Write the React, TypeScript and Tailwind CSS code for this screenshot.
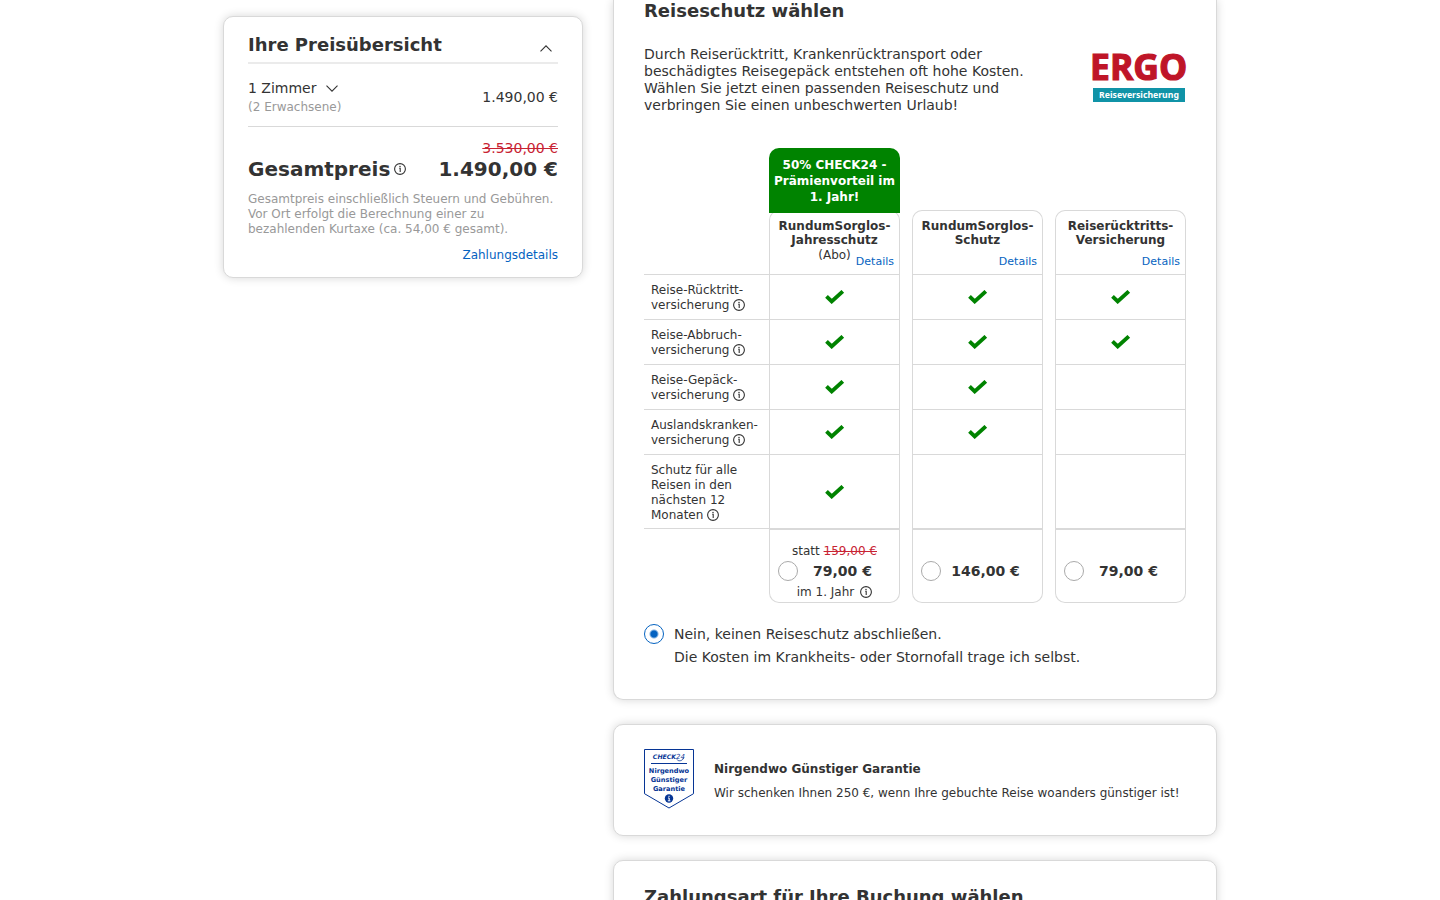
import React, { useState } from 'react';

interface Tariff {
  id: string;
  title: string[];
  suffix?: string;
  badge?: string[];
  price: string;
  oldPrice?: string;
  note?: string;
}

const TARIFFS: Tariff[] = [
  {
    id: 'jahresschutz',
    title: ['RundumSorglos-', 'Jahresschutz'],
    suffix: '(Abo)',
    badge: ['50% CHECK24 -', 'Prämienvorteil im', '1. Jahr!'],
    price: '79,00 €',
    oldPrice: '159,00 €',
    note: 'im 1. Jahr',
  },
  { id: 'schutz', title: ['RundumSorglos-', 'Schutz'], price: '146,00 €' },
  { id: 'ruecktritt', title: ['Reiserücktritts-', 'Versicherung'], price: '79,00 €' },
];

const BENEFITS = [
  { label: ['Reise-Rücktritt-', 'versicherung'], included: [true, true, true] },
  { label: ['Reise-Abbruch-', 'versicherung'], included: [true, true, true] },
  { label: ['Reise-Gepäck-', 'versicherung'], included: [true, true, false] },
  { label: ['Auslandskranken-', 'versicherung'], included: [true, true, false] },
  { label: ['Schutz für alle', 'Reisen in den', 'nächsten 12', 'Monaten'], included: [true, false, false] },
];

const CARD = 'border border-[#d9d9d9] bg-white shadow-[0_0_10px_rgba(0,0,0,0.16)]';
const RADIO =
  'size-5 shrink-0 appearance-none rounded-full border border-[#aaa] bg-white checked:border-[#0563c1] checked:bg-[radial-gradient(circle,#0563c1_3px,transparent_5px)]';

const InfoIcon = () => (
  <svg viewBox="0 0 12 12" className="inline-block size-3 align-[-2px]" fill="none" aria-hidden="true">
    <circle cx="6" cy="6" r="5.4" stroke="#333" strokeWidth="1.1" />
    <circle cx="6" cy="3.4" r="0.75" fill="#333" />
    <path d="M5.2 5.2h1v3.8" stroke="#333" strokeWidth="1.1" />
  </svg>
);

const CheckIcon = () => (
  <svg viewBox="0 0 20 14" className="mx-auto h-3.5 w-5" fill="none" role="img" aria-label="enthalten">
    <path d="M1.5 6.4L6.7 11.4L17.8 1.4" stroke="#008300" strokeWidth="3.9" />
  </svg>
);

const Chevron = ({ up = false }: { up?: boolean }) => (
  <svg viewBox="0 0 12 7" className="inline-block h-[7px] w-3" fill="none" aria-hidden="true">
    <path d={up ? 'M0.5 6.3L6 0.8L11.5 6.3' : 'M0.5 0.7L6 6.2L11.5 0.7'} stroke="#333" strokeWidth="1.1" />
  </svg>
);

const ErgoLogo = () => (
  <svg viewBox="0 0 94 50" className="h-[50px] w-[94px] shrink-0 overflow-visible" role="img" aria-label="ERGO Reiseversicherung">
    <text x="-2" y="27" fill="#bf1528" fontFamily="Open Sans, sans-serif" fontWeight="700" fontSize="35.5" stroke="#bf1528" strokeWidth="1.2">
      ERGO
    </text>
    <rect x="1" y="35" width="92" height="14" fill="#1093a7" />
    <text x="47" y="45" textAnchor="middle" fill="#fff" fontFamily="Noto Sans, sans-serif" fontWeight="700" fontSize="8.7">
      Reiseversicherung
    </text>
  </svg>
);

const GuaranteeSeal = () => (
  <svg viewBox="0 0 50 60" className="h-[60px] w-[50px] shrink-0" role="img" aria-label="Nirgendwo Günstiger Garantie">
    <path d="M0.5 0.5H49.5V44.7L25 59L0.5 44.7Z" fill="#fff" stroke="#063595" strokeWidth="1" />
    <g fill="#063595" textAnchor="middle" fontWeight="700" fontFamily="DejaVu Sans, sans-serif">
      <text x="20.5" y="9.7" fontSize="6.2" fontStyle="italic">CHECK</text>
      <text x="36.5" y="10" fontSize="7" fontStyle="italic" fontWeight="400">24</text>
      <text x="25" y="24" fontSize="6.6">Nirgendwo</text>
      <text x="25" y="33" fontSize="6.6">Günstiger</text>
      <text x="25" y="42" fontSize="6.6">Garantie</text>
    </g>
    <path d="M33 10.5C34 12.5 38.5 12.3 39.5 9" fill="none" stroke="#063595" strokeWidth="0.8" />
    <path d="M7 14.5H43" stroke="#063595" strokeWidth="1" />
    <circle cx="25" cy="49.5" r="4.2" fill="#063595" />
    <path d="M25 46.8v1.2M24 49h1.2v2.7M23.8 51.8h2.6" stroke="#fff" strokeWidth="1" fill="none" />
  </svg>
);

const Lines = ({ lines }: { lines: string[] }) => (
  <>
    {lines.map((line, i) => (
      <React.Fragment key={line}>
        {i > 0 && <br />}
        {line}
      </React.Fragment>
    ))}
  </>
);

const PriceOverview = () => (
  <aside className={`w-[360px] shrink-0 rounded-[10px] px-6 pt-4 pb-3 ${CARD}`}>
    <div className="flex items-center justify-between border-b-2 border-[#ebebeb] pb-[5px]">
      <h2 className="text-lg leading-6 font-bold">Ihre Preisübersicht</h2>
      <button type="button" aria-label="Preisübersicht einklappen" className="flex px-1.5 pt-1.5">
        <Chevron up />
      </button>
    </div>
    <div className="flex items-center justify-between border-b border-[#d9d9d9] pt-3.5 pb-2.5 text-sm">
      <div>
        <button type="button" className="flex items-center gap-2.5 leading-5">
          1 Zimmer <Chevron />
        </button>
        <p className="text-xs leading-[18px] text-[#999]">(2 Erwachsene)</p>
      </div>
      <span>1.490,00 €</span>
    </div>
    <p className="pt-3 text-right text-sm leading-[18px] text-[#c82333] line-through">3.530,00 €</p>
    <div className="flex items-center justify-between text-xl leading-6 font-bold">
      <span className="flex items-center gap-1">
        Gesamtpreis <InfoIcon />
      </span>
      <span>1.490,00 €</span>
    </div>
    <p className="pt-[11px] text-xs leading-[15px] text-[#999]">
      Gesamtpreis einschließlich Steuern und Gebühren.
      <br />
      Vor Ort erfolgt die Berechnung einer zu
      <br />
      bezahlenden Kurtaxe (ca. 54,00 € gesamt).
    </p>
    <p className="pt-2 text-right text-xs leading-5">
      <a href="#zahlungsdetails" className="text-[#0563c1]">Zahlungsdetails</a>
    </p>
  </aside>
);

const InsuranceTable = ({ selected, onSelect }: { selected: string; onSelect: (id: string) => void }) => (
  <table className="w-full table-fixed border-separate border-spacing-0 text-xs">
    <colgroup>
      <col className="w-[125px]" />
      <col />
      <col className="w-3" />
      <col />
      <col className="w-3" />
      <col />
    </colgroup>
    <thead>
      <tr>
        <td className="p-0" />
        {TARIFFS.map((t, i) => (
          <React.Fragment key={t.id}>
            {i > 0 && <td className="p-0" />}
            <th scope="col" className="p-0 align-bottom">
              {t.badge && (
                <div className="relative z-10 -mb-[3px] rounded-t-[10px] bg-[#008300] pt-[9px] pb-2 leading-4 whitespace-nowrap text-white">
                  <Lines lines={t.badge} />
                </div>
              )}
              <div className="relative h-16 rounded-t-[10px] border border-b-0 border-[#d9d9d9] pt-2 leading-[14px]">
                <Lines lines={t.title} />
                {t.suffix && <div className="leading-4 font-normal">{t.suffix}</div>}
                <a href={`#${t.id}`} className="absolute right-[5px] bottom-[5px] text-[11px] font-normal text-[#0563c1]">
                  Details
                </a>
              </div>
            </th>
          </React.Fragment>
        ))}
      </tr>
    </thead>
    <tbody>
      {BENEFITS.map((b) => (
        <tr key={b.label[0]} className="h-[45px]">
          <th scope="row" className="border-t border-[#d9d9d9] pt-2 pb-[5px] pl-[7px] text-left align-top leading-[15px] font-normal whitespace-nowrap">
            <Lines lines={b.label} /> <InfoIcon />
          </th>
          {b.included.map((included, i) => (
            <React.Fragment key={TARIFFS[i].id}>
              {i > 0 && <td className="p-0" />}
              <td className="border-x border-t border-[#d9d9d9] p-0 align-middle">{included && <CheckIcon />}</td>
            </React.Fragment>
          ))}
        </tr>
      ))}
    </tbody>
    <tfoot>
      <tr className="h-[75px]">
        <td className="border-t border-[#d9d9d9] p-0" />
        {TARIFFS.map((t, i) => (
          <React.Fragment key={t.id}>
            {i > 0 && <td className="p-0" />}
            <td className="rounded-b-[10px] border border-t-2 border-[#d9d9d9] p-0 align-top">
              <label className="block pt-[11px] text-center leading-5">
                <span className="block h-5">
                  {t.oldPrice && (
                    <>
                      statt <s className="text-[#c82333]">{t.oldPrice}</s>
                    </>
                  )}
                </span>
                <span className="flex items-center pr-3 pl-2">
                  <input
                    type="radio"
                    name="reiseschutz"
                    checked={selected === t.id}
                    onChange={() => onSelect(t.id)}
                    className={RADIO}
                  />
                  <span className="flex-1 text-sm leading-5 font-bold">{t.price}</span>
                </span>
                {t.note && (
                  <span className="flex items-center justify-center gap-1.5 pt-px">
                    {t.note} <InfoIcon />
                  </span>
                )}
              </label>
            </td>
          </React.Fragment>
        ))}
      </tr>
    </tfoot>
  </table>
);

const App: React.FC = () => {
  const [selected, setSelected] = useState('keinen');

  return (
    <div className="h-screen overflow-hidden bg-white font-['DejaVu_Sans',sans-serif] text-[#333]">
      <div className="mx-auto flex max-w-[994px] items-start gap-[30px]">
        <div className="pt-4">
          <PriceOverview />
        </div>
        <main className="flex min-w-0 flex-1 flex-col gap-6">
          <section className={`rounded-b-[10px] border-t-0 px-[30px] pt-px pb-[30px] ${CARD}`}>
            <h2 className="text-lg leading-5 font-bold">Reiseschutz wählen</h2>
            <div className="flex items-start justify-between pt-[25px] pb-[34px]">
              <p className="text-sm leading-[17px]">
                Durch Reiserücktritt, Krankenrücktransport oder
                <br />
                beschädigtes Reisegepäck entstehen oft hohe Kosten.
                <br />
                Wählen Sie jetzt einen passenden Reiseschutz und
                <br />
                verbringen Sie einen unbeschwerten Urlaub!
              </p>
              <div className="pt-[7px]">
                <ErgoLogo />
              </div>
            </div>
            <InsuranceTable selected={selected} onSelect={setSelected} />
            <label className="flex items-start gap-2.5 pt-5 text-sm leading-[23px]">
              <input
                type="radio"
                name="reiseschutz"
                checked={selected === 'keinen'}
                onChange={() => setSelected('keinen')}
                className={`mt-px ${RADIO}`}
              />
              <span>
                Nein, keinen Reiseschutz abschließen.
                <br />
                Die Kosten im Krankheits- oder Stornofall trage ich selbst.
              </span>
            </label>
          </section>

          <section className={`flex items-center gap-5 rounded-[10px] px-[30px] pt-6 pb-[26px] ${CARD}`}>
            <GuaranteeSeal />
            <div className="pt-1 text-xs leading-6">
              <h3 className="font-bold">Nirgendwo Günstiger Garantie</h3>
              <p className="whitespace-nowrap">Wir schenken Ihnen 250 €, wenn Ihre gebuchte Reise woanders günstiger ist!</p>
            </div>
          </section>

          <section className={`rounded-[10px] px-[30px] py-6 ${CARD}`}>
            <h2 className="text-lg leading-6 font-bold">Zahlungsart für Ihre Buchung wählen</h2>
          </section>
        </main>
      </div>
    </div>
  );
};

export default App;
